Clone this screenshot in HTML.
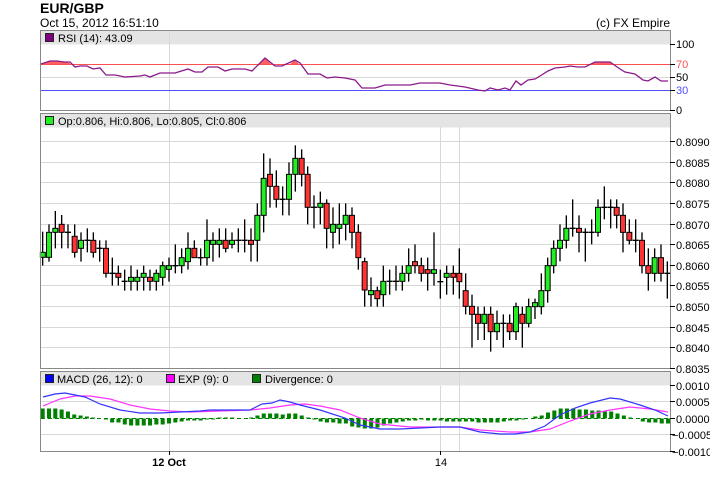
<!DOCTYPE html>
<html><head><meta charset="utf-8"><style>
html,body{margin:0;padding:0;background:#fff;}
svg{display:block;font-family:"Liberation Sans",sans-serif;}
</style></head><body>
<svg width="710" height="487" viewBox="0 0 710 487" xmlns="http://www.w3.org/2000/svg">
<rect width="710" height="487" fill="#fff"/>
<text x="40" y="13" font-size="14" font-weight="bold" fill="#000">EUR/GBP</text>
<text x="40" y="27" font-size="12" fill="#000">Oct 15, 2012 16:51:10</text>
<text x="670" y="27" font-size="12" fill="#000" text-anchor="end">(c) FX Empire</text>

<!-- RSI panel -->
<rect x="40.5" y="30.5" width="630" height="14" fill="#e4e4e4"/>
<g stroke="#d8d8d8" stroke-width="1">
<line x1="169.5" y1="30" x2="169.5" y2="110"/>
<line x1="41" y1="77.5" x2="670" y2="77.5"/>
</g>
<line x1="41" y1="64.5" x2="670" y2="64.5" stroke="#ff5050"/>
<line x1="41" y1="90.5" x2="670" y2="90.5" stroke="#5050ff"/>
<polygon points="41,64 50,61 57,61 64,62 70,63 70,64" fill="#ff6060"/>
<polygon points="259,64 265,58 271,64" fill="#ff6060"/>
<polygon points="290,64 295,60 299,64" fill="#ff6060"/>
<polygon points="592,64 595,62 610,62 613,64" fill="#ff6060"/>
<polyline fill="none" stroke="#8a1a8a" stroke-width="1.3" points="41,64 50,61 57,61 64,62 70,62 75,67 80,66 87,66 93,69 100,68 106,75 115,75 125,77 140,76 145,75 150,77 160,73 175,73 188,69 195,72 202,72 208,67 218,67 225,71 232,69 245,69 252,71 265,58 275,66 282,66 295,60 300,63 308,74 320,74 327,78 335,77 345,78 355,80 362,88 375,88 385,85 410,85 420,83 440,83 450,85 465,87 478,90 485,91 490,88 498,90 505,88 510,90 516,81 521,85 528,80 535,79 540,76 548,71 555,68 565,67 570,66 578,67 585,67 595,62 610,62 620,69 625,72 635,74 643,80 648,81 655,77 661,81 668,81"/>
<rect x="40.5" y="30.5" width="630" height="80" fill="none" stroke="#888"/>
<rect x="45.5" y="33.5" width="8" height="8" fill="#800080" stroke="#222"/>
<text x="58" y="42" font-size="11" fill="#000">RSI (14): 43.09</text>
<g stroke="#000"><line x1="670" y1="44.5" x2="675" y2="44.5"/><line x1="670" y1="64.5" x2="675" y2="64.5"/><line x1="670" y1="77.5" x2="675" y2="77.5"/><line x1="670" y1="90.5" x2="675" y2="90.5"/><line x1="670" y1="110.5" x2="675" y2="110.5"/></g>
<g font-size="11"><text x="676" y="48">100</text><text x="676" y="68" fill="#ff5050">70</text><text x="676" y="81">50</text><text x="676" y="94" fill="#5050ff">30</text><text x="676" y="114">0</text></g>

<!-- Main panel -->
<rect x="40.5" y="113.5" width="630" height="14" fill="#e4e4e4"/>
<g stroke="#d8d8d8" stroke-width="1">
<line x1="169.5" y1="113" x2="169.5" y2="368"/>
<line x1="440.5" y1="127" x2="440.5" y2="368"/>
<line x1="459.5" y1="127" x2="459.5" y2="368"/>
<line x1="41" y1="141.5" x2="670" y2="141.5"/>
<line x1="41" y1="162.5" x2="670" y2="162.5"/>
<line x1="41" y1="182.5" x2="670" y2="182.5"/>
<line x1="41" y1="203.5" x2="670" y2="203.5"/>
<line x1="41" y1="224.5" x2="670" y2="224.5"/>
<line x1="41" y1="244.5" x2="670" y2="244.5"/>
<line x1="41" y1="265.5" x2="670" y2="265.5"/>
<line x1="41" y1="285.5" x2="670" y2="285.5"/>
<line x1="41" y1="306.5" x2="670" y2="306.5"/>
<line x1="41" y1="327.5" x2="670" y2="327.5"/>
<line x1="41" y1="347.5" x2="670" y2="347.5"/>
</g>
<g transform="translate(40,130) scale(0.33333)">
<path fill="none" stroke="#000" stroke-width="4" d="M8 305V407M27 283V395M46 243V355M65 255V355M84 283V355M104 283V383M123 307V395M142 295V367M160 307V383M179 331V395M198 331V443M217 383V467M235 407V467M254 419V482M273 407V482M292 419V482M311 407V482M330 419V482M349 419V482M368 395V467M387 383V455M406 343V430M425 355V430M444 307V419M463 331V383M482 355V407M501 268V407M519 307V395M538 295V383M557 295V367M576 307V355M595 295V367M614 268V367M633 295V395M652 220V395M671 70V307M690 85V233M709 121V233M728 169V256M747 97V256M766 46V185M785 58V169M803 109V283M822 196V295M841 185V283M860 208V355M879 232V355M898 220V343M917 220V331M936 232V355M955 283V419M974 383V530M993 442V530M1012 470V530M1030 407V530M1049 419V494M1068 407V482M1087 407V482M1106 355V455M1125 343V430M1144 383V455M1163 383V482M1182 307V467M1201 419V506M1220 407V494M1240 407V494M1258 355V506M1277 430V553M1296 494V653M1314 530V630M1333 530V630M1352 530V665M1371 542V630M1390 553V653M1409 553V630M1428 518V630M1447 530V653M1466 506V592M1485 506V567M1504 430V553M1523 383V518M1541 331V430M1560 283V394M1579 256V355M1598 208V320M1617 256V367M1636 295V395M1655 268V343M1674 208V320M1693 169V268M1712 208V295M1730 208V295M1749 220V367M1768 268V343M1787 268V367M1806 307V430M1825 355V482M1844 355V455M1863 343V455M1882 394V506"/>
<path fill="none" stroke="#000" stroke-width="4" d="M75 307h18M133 331h18M170 355h18M208 430h18M245 454h18M397 407h18M473 383h18M586 331h18M605 331h18M719 208h18M813 232h18M1040 454h18M1059 454h18M1192 455h18M1381 580h18M1589 295h18M1627 307h18M1646 307h18M1684 232h18M1703 232h18M1778 331h18M1873 430h18"/>
<g fill="#22ee22" stroke="#000" stroke-width="3">
<rect x="1" y="367" width="15" height="15"/><rect x="19.5" y="307" width="15" height="75"/><rect x="38.5" y="295" width="15" height="12"/><rect x="115.5" y="331" width="15" height="24"/><rect x="265.5" y="442" width="15" height="12"/><rect x="284.5" y="442" width="15" height="12"/><rect x="303.5" y="430" width="15" height="12"/><rect x="341.5" y="430" width="15" height="24"/><rect x="360.5" y="407" width="15" height="35"/><rect x="379.5" y="407" width="15" height="11"/><rect x="417.5" y="383" width="15" height="24"/><rect x="436.5" y="355" width="15" height="40"/><rect x="493.5" y="331" width="15" height="52"/><rect x="511.5" y="331" width="15" height="12"/><rect x="530.5" y="331" width="15" height="12"/><rect x="568.5" y="331" width="15" height="12"/><rect x="644.5" y="256" width="15" height="75"/><rect x="663.5" y="145" width="15" height="111"/><rect x="739.5" y="133" width="15" height="75"/><rect x="758.5" y="85" width="15" height="48"/><rect x="833.5" y="220" width="15" height="12"/><rect x="871.5" y="283" width="15" height="24"/><rect x="890.5" y="283" width="15" height="12"/><rect x="909.5" y="256" width="15" height="27"/><rect x="985.5" y="482" width="15" height="12"/><rect x="1022.5" y="454" width="15" height="40"/><rect x="1079.5" y="430" width="15" height="24"/><rect x="1098.5" y="407" width="15" height="23"/><rect x="1174.5" y="419" width="15" height="11"/><rect x="1212.5" y="430" width="15" height="12"/><rect x="1325.5" y="553" width="15" height="27"/><rect x="1363.5" y="580" width="15" height="25"/><rect x="1420.5" y="530" width="15" height="75"/><rect x="1458.5" y="530" width="15" height="50"/><rect x="1477.5" y="518" width="15" height="12"/><rect x="1496.5" y="482" width="15" height="48"/><rect x="1515.5" y="407" width="15" height="75"/><rect x="1533.5" y="355" width="15" height="52"/><rect x="1552.5" y="331" width="15" height="24"/><rect x="1571.5" y="295" width="15" height="36"/><rect x="1666.5" y="232" width="15" height="75"/><rect x="1836.5" y="383" width="15" height="47"/>
</g>
<g fill="#ff3333" stroke="#000" stroke-width="3">
<rect x="57.5" y="283" width="15" height="24"/><rect x="96.5" y="319" width="15" height="48"/><rect x="152.5" y="331" width="15" height="36"/><rect x="190.5" y="355" width="15" height="75"/><rect x="227.5" y="430" width="15" height="12"/><rect x="322.5" y="442" width="15" height="12"/><rect x="455.5" y="355" width="15" height="28"/><rect x="549.5" y="331" width="15" height="24"/><rect x="625.5" y="331" width="15" height="12"/><rect x="682.5" y="133" width="15" height="36"/><rect x="701.5" y="169" width="15" height="39"/><rect x="777.5" y="85" width="15" height="48"/><rect x="795.5" y="133" width="15" height="99"/><rect x="852.5" y="220" width="15" height="75"/><rect x="928.5" y="256" width="15" height="51"/><rect x="947.5" y="307" width="15" height="76"/><rect x="966.5" y="395" width="15" height="85"/><rect x="1004.5" y="482" width="15" height="24"/><rect x="1117.5" y="395" width="15" height="12"/><rect x="1136.5" y="407" width="15" height="23"/><rect x="1155.5" y="419" width="15" height="11"/><rect x="1232.5" y="430" width="15" height="12"/><rect x="1250.5" y="430" width="15" height="25"/><rect x="1269.5" y="482" width="15" height="47"/><rect x="1288.5" y="529" width="15" height="24"/><rect x="1306.5" y="553" width="15" height="27"/><rect x="1344.5" y="553" width="15" height="52"/><rect x="1401.5" y="580" width="15" height="25"/><rect x="1439.5" y="553" width="15" height="27"/><rect x="1609.5" y="295" width="15" height="12"/><rect x="1722.5" y="232" width="15" height="24"/><rect x="1741.5" y="256" width="15" height="51"/><rect x="1760.5" y="307" width="15" height="24"/><rect x="1798.5" y="331" width="15" height="76"/><rect x="1817.5" y="407" width="15" height="23"/><rect x="1855.5" y="383" width="15" height="47"/>
</g>
</g>
<rect x="40.5" y="113.5" width="630" height="255" fill="none" stroke="#888"/>
<rect x="45.5" y="116.5" width="8" height="8" fill="#22ee22" stroke="#222"/>
<text x="58" y="125" font-size="11" fill="#000">Op:0.806, Hi:0.806, Lo:0.805, Cl:0.806</text>
<g stroke="#000"><line x1="670" y1="141.5" x2="675" y2="141.5"/><line x1="670" y1="162.5" x2="675" y2="162.5"/><line x1="670" y1="182.5" x2="675" y2="182.5"/><line x1="670" y1="203.5" x2="675" y2="203.5"/><line x1="670" y1="224.5" x2="675" y2="224.5"/><line x1="670" y1="244.5" x2="675" y2="244.5"/><line x1="670" y1="265.5" x2="675" y2="265.5"/><line x1="670" y1="285.5" x2="675" y2="285.5"/><line x1="670" y1="306.5" x2="675" y2="306.5"/><line x1="670" y1="327.5" x2="675" y2="327.5"/><line x1="670" y1="347.5" x2="675" y2="347.5"/><line x1="670" y1="368.5" x2="675" y2="368.5"/></g>
<g font-size="11"><text x="676" y="146">0.8090</text><text x="676" y="167">0.8085</text><text x="676" y="187">0.8080</text><text x="676" y="208">0.8075</text><text x="676" y="229">0.8070</text><text x="676" y="249">0.8065</text><text x="676" y="270">0.8060</text><text x="676" y="290">0.8055</text><text x="676" y="311">0.8050</text><text x="676" y="332">0.8045</text><text x="676" y="352">0.8040</text><text x="676" y="373">0.8035</text></g>

<!-- MACD panel -->
<rect x="40.5" y="371.5" width="630" height="14" fill="#e4e4e4"/>
<g stroke="#d8d8d8" stroke-width="1">
<line x1="169.5" y1="371" x2="169.5" y2="451"/>
<line x1="440.5" y1="386" x2="440.5" y2="451"/>
<line x1="459.5" y1="371" x2="459.5" y2="451"/>
<line x1="41" y1="401.5" x2="670" y2="401.5"/>
<line x1="41" y1="434.5" x2="670" y2="434.5"/>
</g>
<line x1="41" y1="418.5" x2="670" y2="418.5" stroke="#008000" stroke-dasharray="4,3"/>
<g transform="translate(42.67,418.5) scale(6.317,1)">
<path fill="none" stroke="#008000" stroke-width="0.64" d="M0 0V-10M1 0V-10M2 0V-10M3 0V-9M4 0V-7M5 0V-4M6 0V-3M7 0V-2M8 0V-1M10 0V1M11 0V4M12 0V4M13 0V6M14 0V7M15 0V7M16 0V7M17 0V7M18 0V6M19 0V6M20 0V5M21 0V4M22 0V3M23 0V2M24 0V2M25 0V2M26 0V1M27 0V1M28 0V-1M29 0V-1M30 0V-1M33 0V-1M34 0V-3M35 0V-5M36 0V-5M37 0V-5M38 0V-4M39 0V-5M40 0V-5M41 0V-3M42 0V-1M43 0V1M44 0V3M45 0V4M46 0V4M47 0V5M48 0V5M49 0V8M50 0V9M51 0V10M52 0V10M53 0V9M54 0V7M55 0V5M56 0V4M57 0V3M58 0V2M59 0V2M60 0V1M61 0V2M62 0V2M63 0V2M64 0V3M65 0V3M66 0V3M67 0V3M68 0V3M69 0V4M70 0V4M71 0V4M72 0V4M73 0V3M74 0V2M75 0V2M76 0V1M78 0V-2M79 0V-3M80 0V-6M81 0V-8M82 0V-10M83 0V-10M84 0V-10M85 0V-9M86 0V-9M87 0V-8M88 0V-8M89 0V-7M90 0V-7M91 0V-5M92 0V-3M93 0V-1M95 0V3M96 0V4M97 0V4M98 0V5M99 0V5"/>
</g>
<polyline fill="none" stroke="#ff33ff" stroke-width="1.2" points="43,406 60,399 75,396 90,396 110,399 130,405 150,409 170,411 190,412 220,411 250,410 270,408 290,405 305,404 320,406 340,410 360,418 380,424 410,427 440,427 460,427 480,430 510,432 530,432 550,429 570,421 590,414 610,410 630,407 650,409 668,412"/>
<polyline fill="none" stroke="#3333ff" stroke-width="1.2" points="43,397 55,394 65,393 75,395 85,397 100,404 120,410 140,413 160,413 180,412 200,411 210,410 230,410 250,410 262,404 272,403 280,400 290,402 300,405 320,410 345,418 360,425 380,429 400,429 420,428 440,427 460,427 480,432 500,434 515,434 530,432 545,426 560,415 575,408 590,403 610,398 620,399 640,405 655,410 668,416"/>
<rect x="40.5" y="371.5" width="630" height="80" fill="none" stroke="#888"/>
<rect x="45.5" y="374.5" width="8" height="8" fill="#0000ff" stroke="#222"/>
<text x="57" y="383" font-size="11" fill="#000">MACD (26, 12): 0</text>
<rect x="166.5" y="374.5" width="8" height="8" fill="#ff00ff" stroke="#222"/>
<text x="178" y="383" font-size="11" fill="#000">EXP (9): 0</text>
<rect x="252.5" y="374.5" width="8" height="8" fill="#008000" stroke="#222"/>
<text x="265" y="383" font-size="11" fill="#000">Divergence: 0</text>
<g stroke="#000"><line x1="670" y1="385.5" x2="675" y2="385.5"/><line x1="670" y1="401.5" x2="675" y2="401.5"/><line x1="670" y1="418.5" x2="675" y2="418.5"/><line x1="670" y1="434.5" x2="675" y2="434.5"/><line x1="670" y1="451.5" x2="675" y2="451.5"/>
<line x1="169.5" y1="451" x2="169.5" y2="455"/><line x1="440.5" y1="451" x2="440.5" y2="455"/></g>
<g font-size="11"><text x="676" y="390">0.0010</text><text x="676" y="406">0.0005</text><text x="676" y="423">0.0000</text><text x="672" y="439">−0.0005</text><text x="672" y="456">−0.0010</text></g>
<text x="169" y="466" font-size="11" font-weight="bold" text-anchor="middle">12 Oct</text>
<text x="441" y="466" font-size="11" text-anchor="middle">14</text>
</svg>
</body></html>
